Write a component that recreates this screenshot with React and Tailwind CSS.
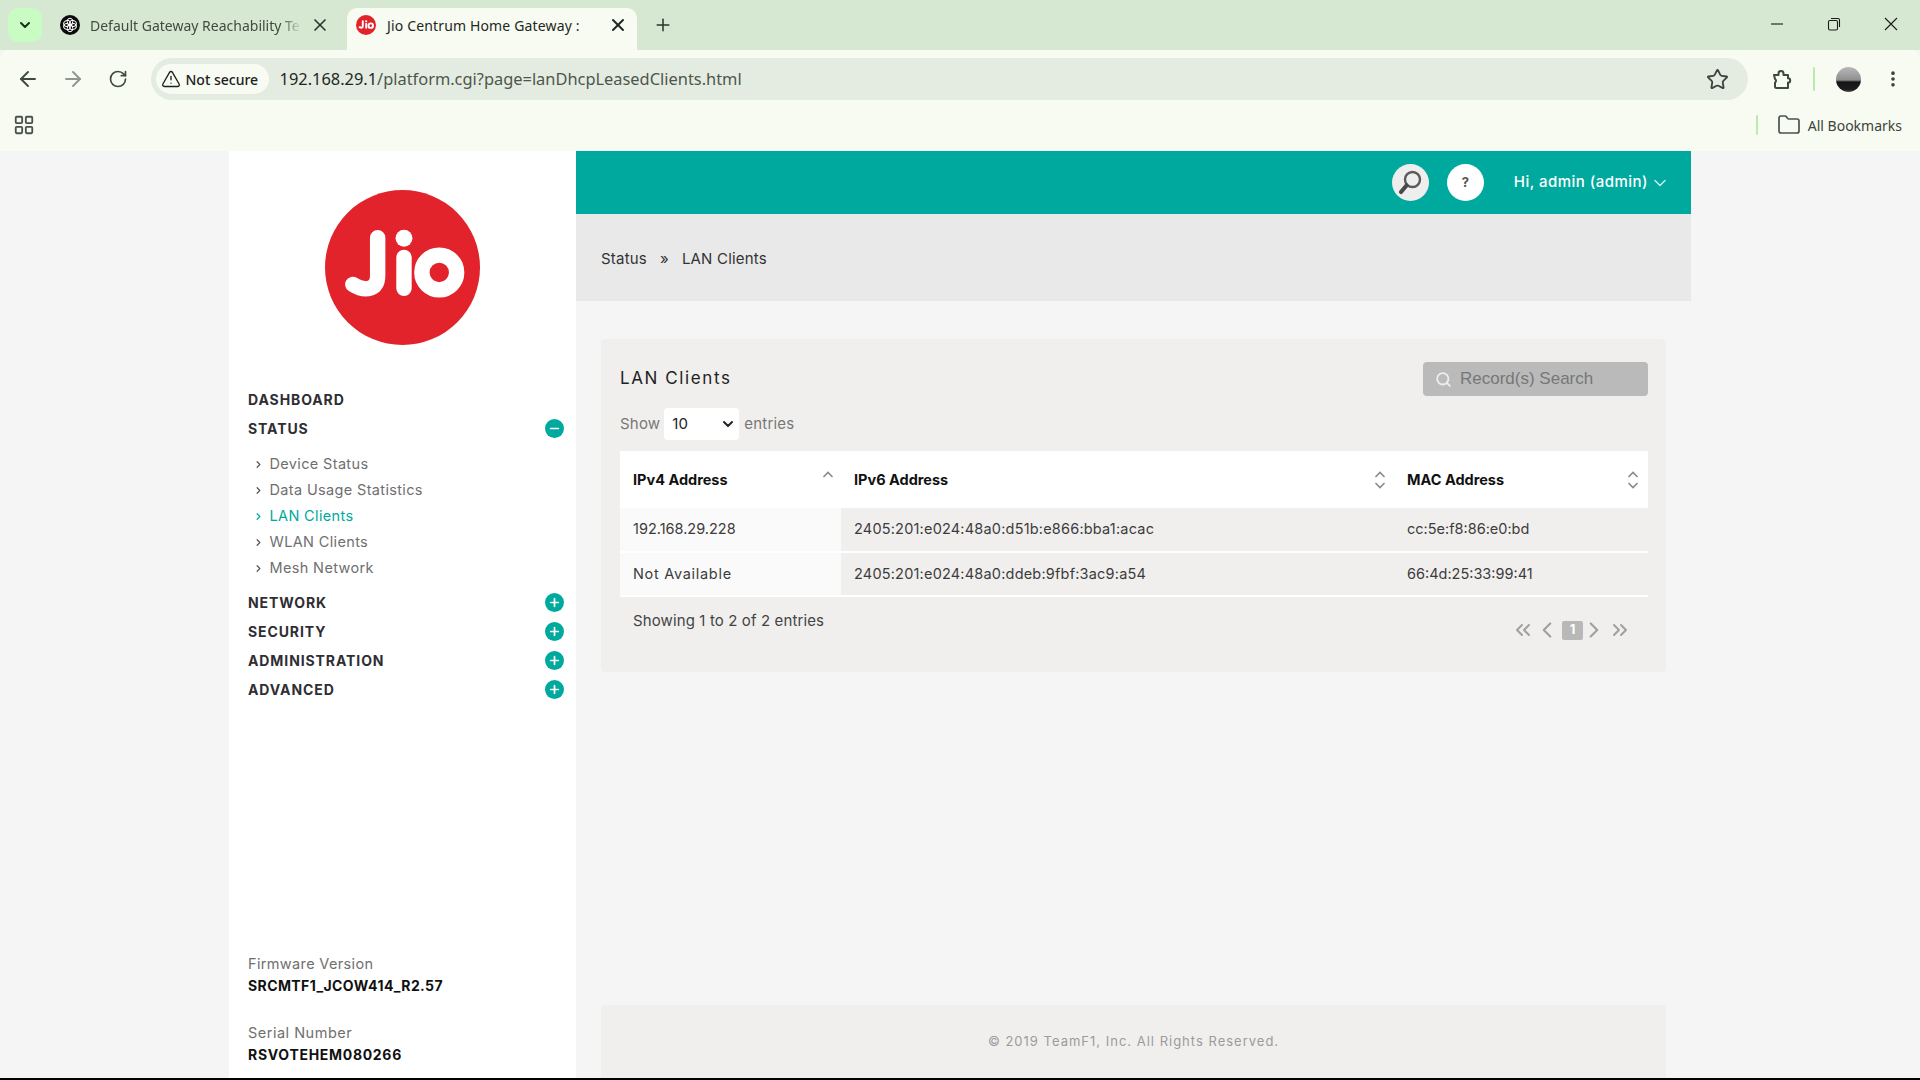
import React from 'react';
import {
  ArrowLeft,
  ArrowRight,
  ChevronDown,
  ChevronLeft,
  ChevronRight,
  ChevronsLeft,
  ChevronsRight,
  EllipsisVertical,
  Folder,
  LayoutGrid,
  Minus,
  Plus,
  RotateCw,
  Search,
  Star,
  TriangleAlert,
  X,
} from 'lucide-react';

const uiFont = "font-['Noto_Sans',sans-serif]";
const pageFont = "font-['Inter',sans-serif]";

function JioLogo({ size, stroke = 15.5 }) {
  return (
    <svg width={size} height={size} viewBox="0 0 156 156" className="shrink-0">
      <circle cx="78" cy="78" r="78" fill="#e2232b" />
      <path d="M53 48V86C53 100 41 103 28 95" fill="none" stroke="#fff" strokeWidth={stroke} strokeLinecap="round" />
      <circle cx="79.5" cy="48.5" r="8.5" fill="#fff" />
      <path d="M79.5 68V99" stroke="#fff" strokeWidth={stroke} strokeLinecap="round" />
      <circle cx="115" cy="83" r="17.5" fill="none" stroke="#fff" strokeWidth={stroke} />
    </svg>
  );
}

function OpenAiMark() {
  return (
    <svg width="20" height="20" viewBox="0 0 20 20" className="shrink-0">
      <circle cx="10" cy="10" r="10" fill="#0c0c0c" />
      <g fill="none" stroke="#fff" strokeWidth="1">
        <ellipse cx="10" cy="6.6" rx="2.8" ry="3.4" />
        <ellipse cx="10" cy="13.4" rx="2.8" ry="3.4" />
        <ellipse cx="7" cy="8.3" rx="2.8" ry="3.4" transform="rotate(60 7 8.3)" />
        <ellipse cx="13" cy="11.7" rx="2.8" ry="3.4" transform="rotate(60 13 11.7)" />
        <ellipse cx="13" cy="8.3" rx="2.8" ry="3.4" transform="rotate(-60 13 8.3)" />
        <ellipse cx="7" cy="11.7" rx="2.8" ry="3.4" transform="rotate(-60 7 11.7)" />
      </g>
    </svg>
  );
}

function WindowIcon({ children }) {
  return (
    <svg width="14" height="14" viewBox="0 0 14 14" fill="none" stroke="#1a1a1a" strokeWidth="1.1">
      {children}
    </svg>
  );
}

function ExtensionIcon() {
  return (
    <svg width="20" height="21" viewBox="0 0 20 21" fill="none" stroke="#3f4a3f" strokeWidth="2" strokeLinejoin="round" className="ml-[24px] shrink-0">
      <path d="M2 6H6.5V4.5a2.5 2.5 0 0 1 5 0V6H16V9.2a2.2 2.2 0 0 1 0 4.4V19H4.5A1.5 1.5 0 0 1 3 17.5V13.5a2 2 0 0 0 0-3.5Z" />
    </svg>
  );
}

function HeaderSearchIcon() {
  return (
    <svg width="26" height="28" viewBox="0 0 26 28" fill="none">
      <circle cx="15.5" cy="10.5" r="7.5" stroke="#5a5a5a" strokeWidth="2.4" />
      <path d="M9.5 16.5L4 23" stroke="#4a4a4a" strokeWidth="4.2" strokeLinecap="round" />
    </svg>
  );
}

function BrowserChrome() {
  return (
    <div className={`${uiFont} shrink-0`}>
      {/* tab strip */}
      <div className="h-[50px] bg-[#d7e8d2] flex items-end pl-2">
        <div className="w-[34px] h-[34px] mb-2 bg-[#c9fcc3] rounded-[10px] flex items-center justify-center">
          <ChevronDown size={16} strokeWidth={3} className="text-[#1f2a1f]" />
        </div>
        <div className="w-[281px] h-[42px] ml-[18px] flex items-center gap-[10px] pb-[8px]">
          <OpenAiMark />
          <span className="w-[212px] overflow-hidden whitespace-nowrap text-[14px] text-[#414b41] [mask-image:linear-gradient(to_right,#000_90%,transparent)]">Default Gateway Reachability Te</span>
          <X size={20} strokeWidth={2} className="-mx-[2.5px] text-[#2b342b]" />
        </div>
        <div className="w-[290px] h-[42px] ml-[6px] bg-[#f7fbf1] rounded-t-[10px] flex items-center pl-[9px] pb-[8px]">
          <JioLogo size={20} stroke={15} />
          <span className="w-[222px] ml-[11px] whitespace-nowrap text-[14px] tracking-[0.15px] text-[#1f271f]">Jio Centrum Home Gateway :</span>
          <X size={20} strokeWidth={2.4} className="-mx-[1px] text-[#1f271f]" />
        </div>
        <Plus size={20} strokeWidth={1.8} className="ml-[16px] mb-[15px] text-[#2b342b]" />
        <div className="ml-auto h-[50px] flex items-center pr-[22px] gap-[43px] pb-[2px]">
          <WindowIcon>
            <path d="M1 7H13" />
          </WindowIcon>
          <WindowIcon>
            <rect x="1.5" y="3.5" width="9" height="9.5" rx="1.5" />
            <path d="M4 1.5H11C12 1.5 12.5 2 12.5 3V10" />
          </WindowIcon>
          <WindowIcon>
            <path d="M1 1L13 13M13 1L1 13" />
          </WindowIcon>
        </div>
      </div>

      {/* toolbar */}
      <div className="h-[58px] bg-[#f7fbf1] rounded-t-[10px] flex items-center pl-[18px] pr-[12px]">
        <ArrowLeft size={24} strokeWidth={1.9} className="-mx-[2.5px] text-[#3f4a3f]" />
        <ArrowRight size={24} strokeWidth={1.9} className="ml-[23.5px] -mr-[2.5px] text-[#8f978f]" />
        <RotateCw size={20} strokeWidth={2} className="ml-[25.5px] -mr-[1px] text-[#3f4a3f]" />
        <div className="w-[1597px] h-[42px] ml-[24px] bg-[#e4ece1] rounded-full flex items-center pl-[5px] pr-[21px]">
          <div className="w-[113px] h-[30px] bg-[#f7fbf1] rounded-full flex items-center pl-[5px] gap-[5px] text-[14px] font-medium text-[#1c211c]">
            <TriangleAlert size={20} strokeWidth={1.6} />
            <span>Not secure</span>
          </div>
          <span className="ml-[11px] mt-[1px] text-[16.4px] text-[#1f271f] whitespace-nowrap">
            192.168.29.1<span className="text-[#4c564c]">/platform.cgi?page=lanDhcpLeasedClients.html</span>
          </span>
          <Star size={23} strokeWidth={1.9} className="ml-auto -mx-[2.5px] text-[#3a443a]" />
        </div>
        <ExtensionIcon />
        <div className="w-[2px] h-[24px] ml-[21px] bg-[#b9eab0] rounded-full" />
        <div className="w-[25px] h-[25px] ml-[21px] rounded-full bg-[linear-gradient(#b8b8b8_0%,#8f8f8f_52%,#141416_60%,#1d1d1f_90%,#555_100%)]" />
        <EllipsisVertical size={20} strokeWidth={2.4} className="ml-[22px] text-[#3a443a]" />
      </div>

      {/* bookmarks */}
      <div className="h-[43px] bg-[#f7fbf1] flex items-center pl-[13px] pr-[18px] pb-[9px]">
        <LayoutGrid size={22} strokeWidth={2} className="text-[#4a534a]" />
        <div className="w-[2px] h-[20px] ml-auto bg-[#b9eab0] rounded-full" />
        <Folder size={24} strokeWidth={1.7} className="ml-[19px] -mx-[2px] text-[#4a534a]" />
        <span className="ml-[9px] text-[14px] text-[#3a443a] whitespace-nowrap">All Bookmarks</span>
      </div>
    </div>
  );
}

function NavHeading({ label, icon }) {
  return (
    <div className="h-[29px] flex items-center justify-between pr-[8px]">
      <span className="text-[14px] font-bold text-[#2e2e33] tracking-[0.9px]">{label}</span>
      {icon && (
        <span className="w-[19px] h-[19px] rounded-full bg-[#00a99d] flex items-center justify-center text-white">
          {icon === 'minus' ? <Minus size={13} strokeWidth={3.2} /> : <Plus size={13} strokeWidth={3.2} />}
        </span>
      )}
    </div>
  );
}

function SubLink({ label, active }) {
  return (
    <div className={`h-[26px] flex items-center pl-[5px] text-[14.5px] tracking-[0.35px] ${active ? 'text-[#00a99d]' : 'text-[#6f6f6f]'}`}>
      <ChevronRight size={11} strokeWidth={2.6} className={active ? 'text-[#00a99d]' : 'text-[#555]'} />
      <span className="ml-[5.5px]">{label}</span>
    </div>
  );
}

function Sidebar() {
  return (
    <aside className={`${pageFont} w-[347px] shrink-0 bg-white flex flex-col pl-[19px] pr-[4px]`}>
      <div className="pt-[39px] pl-[77px]">
        <JioLogo size={155} />
      </div>
      <div className="mt-[40px]">
        <NavHeading label="DASHBOARD" />
        <NavHeading label="STATUS" icon="minus" />
        <div className="mt-[8px] mb-[7px]">
          <SubLink label="Device Status" />
          <SubLink label="Data Usage Statistics" />
          <SubLink label="LAN Clients" active />
          <SubLink label="WLAN Clients" />
          <SubLink label="Mesh Network" />
        </div>
        <NavHeading label="NETWORK" icon="plus" />
        <NavHeading label="SECURITY" icon="plus" />
        <NavHeading label="ADMINISTRATION" icon="plus" />
        <NavHeading label="ADVANCED" icon="plus" />
      </div>
      <div className="mt-auto">
        <div className="text-[14.5px] text-[#6f6f6f] leading-[22px] tracking-[0.35px]">Firmware Version</div>
        <div className="text-[14px] font-bold text-[#111] leading-[22px] tracking-[0.4px]">SRCMTF1_JCOW414_R2.57</div>
        <div className="mt-[25px] text-[14.5px] text-[#6f6f6f] leading-[22px] tracking-[0.5px]">Serial Number</div>
        <div className="text-[14px] font-bold text-[#111] leading-[22px] tracking-[0.7px]">RSVOTEHEM080266</div>
        <div className="h-[12px]" />
      </div>
    </aside>
  );
}

function SortArrows({ both = true }) {
  return (
    <svg width="12" height="18" viewBox="0 0 12 18" fill="none" stroke="#8a8a8a" strokeWidth="1.6" className="shrink-0">
      <path d="M1.5 6L6 1.5L10.5 6" />
      {both && <path d="M1.5 12L6 16.5L10.5 12" />}
    </svg>
  );
}

function ClientsTable() {
  const rows = [
    ['192.168.29.228', '2405:201:e024:48a0:d51b:e866:bba1:acac', 'cc:5e:f8:86:e0:bd', 'pb-[2px]'],
    ['Not Available', '2405:201:e024:48a0:ddeb:9fbf:3ac9:a54', '66:4d:25:33:99:41', ''],
  ];
  return (
    <table className="w-full table-fixed border-collapse text-[14.5px]">
      <thead>
        <tr className="h-[57px] bg-white text-[14.5px] font-bold text-[#111]">
          <th className="w-[221px] pl-[13px] pr-[7px] text-left">
            <div className="flex items-center justify-between">
              IPv4 Address
              <SortArrows both={false} />
            </div>
          </th>
          <th className="w-[553px] pl-[13px] pr-[8px] text-left">
            <div className="flex items-center justify-between">
              IPv6 Address
              <SortArrows />
            </div>
          </th>
          <th className="pl-[13px] pr-[9px] text-left">
            <div className="flex items-center justify-between">
              MAC Address
              <SortArrows />
            </div>
          </th>
        </tr>
      </thead>
      <tbody className="text-[#3c3c3c]">
        {rows.map((row, i) => (
          <tr key={i} className="h-[44px] border-b-2 border-white">
            <td className={`pl-[13px] bg-[#fafafa] ${row[3]} ${i === 1 ? 'tracking-[0.7px]' : ''}`}>{row[0]}</td>
            <td className={`pl-[13px] bg-[#f0efee] tracking-[0.2px] ${row[3]}`}>{row[1]}</td>
            <td className={`pl-[13px] bg-[#f0efee] ${row[3]}`}>{row[2]}</td>
          </tr>
        ))}
      </tbody>
    </table>
  );
}

function Content() {
  return (
    <main className={`${pageFont} w-[1115px] shrink-0 flex flex-col bg-[#f5f5f5]`}>
      <div className="h-[63px] shrink-0 bg-[#00a99d] flex items-center justify-end pr-[21px] text-white">
        <span className="w-[37px] h-[37px] rounded-full bg-[#eeeeee] flex items-center justify-center">
          <HeaderSearchIcon />
        </span>
        <span className="w-[37px] h-[37px] ml-[18px] rounded-full bg-white flex items-center justify-center text-[13px] font-bold text-[#555]">?</span>
        <span className="ml-[30px] text-[15px] font-medium tracking-[0.47px] whitespace-nowrap">Hi, admin (admin)</span>
        <ChevronDown size={20} strokeWidth={1.8} className="ml-[2px] text-[#c9ece8]" />
      </div>
      <div className="h-[87px] shrink-0 bg-[#e9e9e9] flex items-center pl-[25px] pt-[4px] text-[15px] tracking-[0.2px] text-[#333]">
        <span>Status</span>
        <span className="mx-[13px]">»</span>
        <span>LAN Clients</span>
      </div>
      <div className="flex-1 flex flex-col pl-[25px] pr-[25px]">
        <section className="mt-[38px] h-[333px] bg-[#f0efee] rounded-[4px] pt-[23px] pl-[19px] pr-[18px]">
          <div className="flex items-center justify-between">
            <h2 className="text-[17px] font-normal tracking-[1.6px] text-[#222]">LAN Clients</h2>
            <div className="w-[225px] h-[34px] bg-[#bababa] rounded-[4px] flex items-center pl-[12px] font-['Liberation_Sans',sans-serif]">
              <Search size={17} strokeWidth={2.6} className="text-[#eeeeee] shrink-0" />
              <input
                placeholder="Record(s) Search"
                className="ml-[8px] w-[180px] bg-transparent text-[17px] outline-none placeholder:text-[#777]"
              />
            </div>
          </div>
          <div className="mt-[12px] h-[32px] flex items-center text-[15px] tracking-[0.2px] text-[#777]">
            <span>Show</span>
            <div className="w-[75px] h-[32px] ml-[4px] bg-white rounded-[4px] flex items-center justify-between pl-[8px] pr-[3px] text-[#222]">
              <span>10</span>
              <ChevronDown size={16} strokeWidth={3} />
            </div>
            <span className="ml-[5px]">entries</span>
          </div>
          <div className="mt-[11px]">
            <ClientsTable />
          </div>
          <div className="flex justify-between pl-[13px] pr-[16px]">
            <span className="mt-[13px] text-[15px] tracking-[0.12px] text-[#444]">Showing 1 to 2 of 2 entries</span>
            <div className="mt-[23px] flex items-center text-[#a0a0a0] h-[20px]">
              <ChevronsLeft size={24} strokeWidth={2} />
              <ChevronLeft size={26} strokeWidth={2} className="-ml-[1px]" />
              <span className="w-[21px] h-[19px] ml-[2.5px] bg-[#b8b8b8] rounded-[2px] flex items-center justify-center text-[13px] font-bold text-white">1</span>
              <ChevronRight size={26} strokeWidth={2} className="-ml-[2.5px]" />
              <ChevronsRight size={24} strokeWidth={2} className="ml-[1.5px]" />
            </div>
          </div>
        </section>
        <footer className="mt-auto h-[73px] bg-[#f0efee] rounded-t-[4px] flex items-center justify-center text-[13px] tracking-[1px] text-[#9b9b9b]">
          © 2019 TeamF1, Inc. All Rights Reserved.
        </footer>
      </div>
    </main>
  );
}

export default function App() {
  return (
    <div className="w-[1920px] h-[1080px] overflow-hidden flex flex-col bg-[#f5f5f5]">
      <BrowserChrome />
      <div className="flex-1 min-h-0 flex pl-[229px]">
        <Sidebar />
        <Content />
      </div>
      <div className="h-[2px] shrink-0 bg-black" />
    </div>
  );
}
